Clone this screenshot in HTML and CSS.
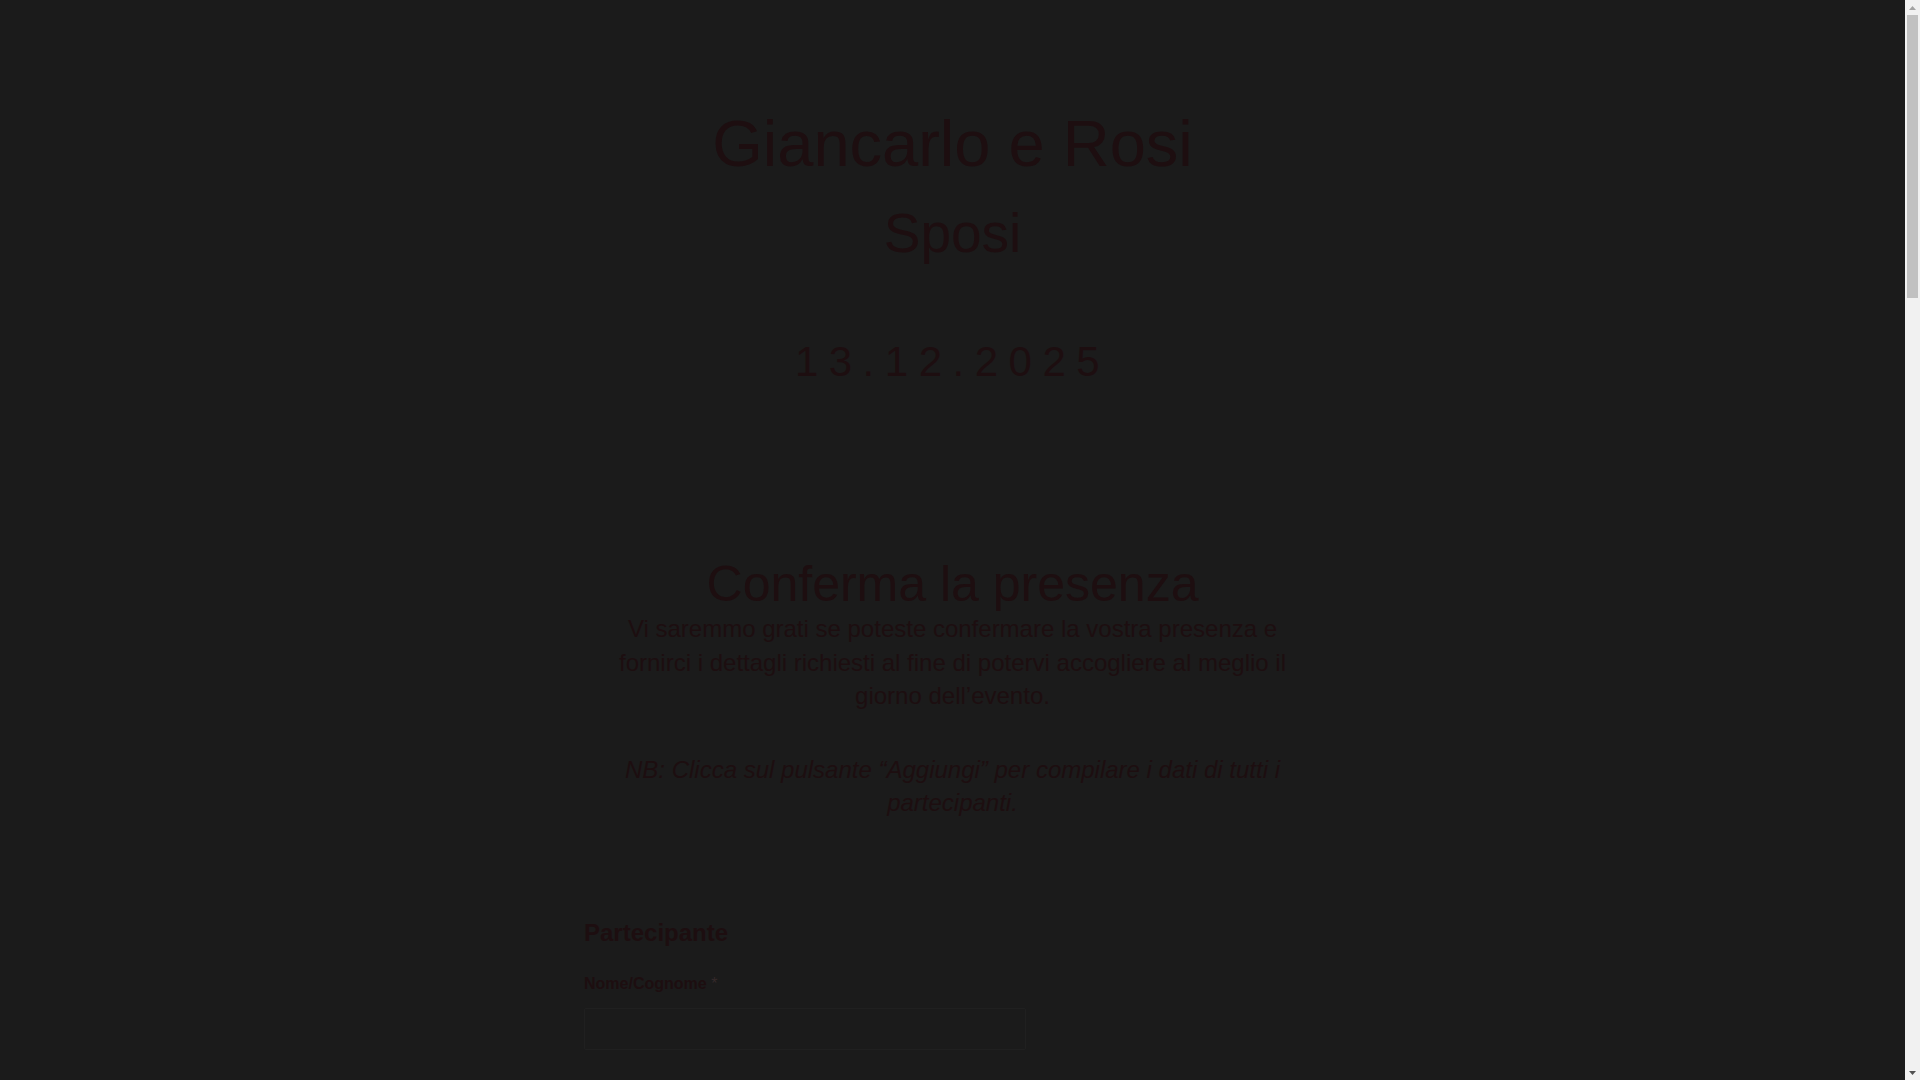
FILE: index.html
```html
<!DOCTYPE html>
<html lang="it">
<head>
<meta charset="utf-8">
<title>Giancarlo e Rosi - Sposi</title>
<link rel="stylesheet" href="styles.css">
</head>
<body>
<div class="viewport">
  <main class="page">
    <header class="hero">
      <h1 class="names">Giancarlo e Rosi</h1>
      <p class="subtitle">Sposi</p>
      <p class="date">13.12.2025</p>
    </header>
    <section class="rsvp">
      <h2 class="rsvp-title">Conferma la presenza</h2>
      <p class="rsvp-text">Vi saremmo grati se poteste confermare la vostra presenza e fornirci i dettagli richiesti al fine di potervi accogliere al meglio il giorno dell’evento.</p>
      <p class="rsvp-note">NB: Clicca sul pulsante “Aggiungi” per compilare i dati di tutti i partecipanti.</p>
      <form class="form">
        <h3 class="form-title">Partecipante</h3>
        <div class="field">
          <label class="label">Nome/Cognome <span class="req">*</span></label>
          <input class="input" type="text">
        </div>
      </form>
    </section>
  </main>
</div>
<div class="scrollbar" aria-hidden="true">
  <div class="sb-btn">
    <svg width="7" height="4" viewBox="0 0 7 4"><path d="M3.5 0 L7 4 L0 4 Z" fill="#a3a3a3"/></svg>
  </div>
  <div class="sb-track">
    <div class="sb-thumb"></div>
  </div>
  <div class="sb-btn">
    <svg width="7" height="4" viewBox="0 0 7 4"><path d="M0 0 L7 0 L3.5 4 Z" fill="#505050"/></svg>
  </div>
</div>
</body>
</html>
```
FILE: styles.css
```css
html, body {
  margin: 0;
  padding: 0;
  height: 100%;
}

body {
  display: flex;
  overflow: hidden;
  background: #1b1b1b;
  color: #1d0e10;
  font-family: "Liberation Sans", Arial, sans-serif;
}

.viewport {
  flex: 1;
  height: 100%;
  overflow-y: auto;
  scrollbar-width: none;
}

.viewport::-webkit-scrollbar {
  display: none;
}

.scrollbar {
  display: flex;
  flex-direction: column;
  width: 15px;
  flex: 0 0 15px;
  height: 100%;
  background: #f1f1f1;
}

.sb-btn {
  display: flex;
  align-items: center;
  justify-content: center;
  height: 15px;
  flex: 0 0 15px;
}

.sb-track {
  flex: 1;
  padding: 0 2px;
}

.sb-thumb {
  height: 283px;
  background: #c1c1c1;
}

.page {
  box-sizing: border-box;
  min-height: 4007px;
  padding-top: 106px;
}

.hero {
  text-align: center;
}

.names {
  margin: 0;
  font-size: 65px;
  line-height: 76px;
  font-weight: 400;
}

.subtitle {
  margin: 19px 0 0;
  font-size: 55px;
  line-height: 64px;
}

.date {
  margin: 72px 0 0;
  font-size: 42px;
  line-height: 50px;
  letter-spacing: 10.5px;
}

.rsvp {
  margin-top: 169px;
  text-align: center;
}

.rsvp-title {
  margin: 0;
  font-size: 50px;
  line-height: 56px;
  font-weight: 400;
}

.rsvp-text {
  width: 700px;
  margin: 0 auto;
  font-size: 24px;
  line-height: 33.6px;
}

.rsvp-note {
  width: 700px;
  margin: 40px auto 0;
  font-size: 24px;
  line-height: 33.6px;
  font-style: italic;
}

.form {
  width: 737px;
  margin: 99px auto 0;
  text-align: left;
}

.form-title {
  margin: 0;
  font-size: 24px;
  line-height: 28px;
  font-weight: 700;
}

.field {
  margin-top: 27px;
}

.label {
  display: block;
  font-size: 16px;
  line-height: 20px;
  font-weight: 700;
}

.req {
  color: #35292a;
  font-weight: 400;
}

.input {
  display: block;
  box-sizing: border-box;
  width: 60%;
  height: 42px;
  margin-top: 14px;
  border: 1px solid #202020;
  border-radius: 2px;
  background: transparent;
  font: inherit;
}
```
